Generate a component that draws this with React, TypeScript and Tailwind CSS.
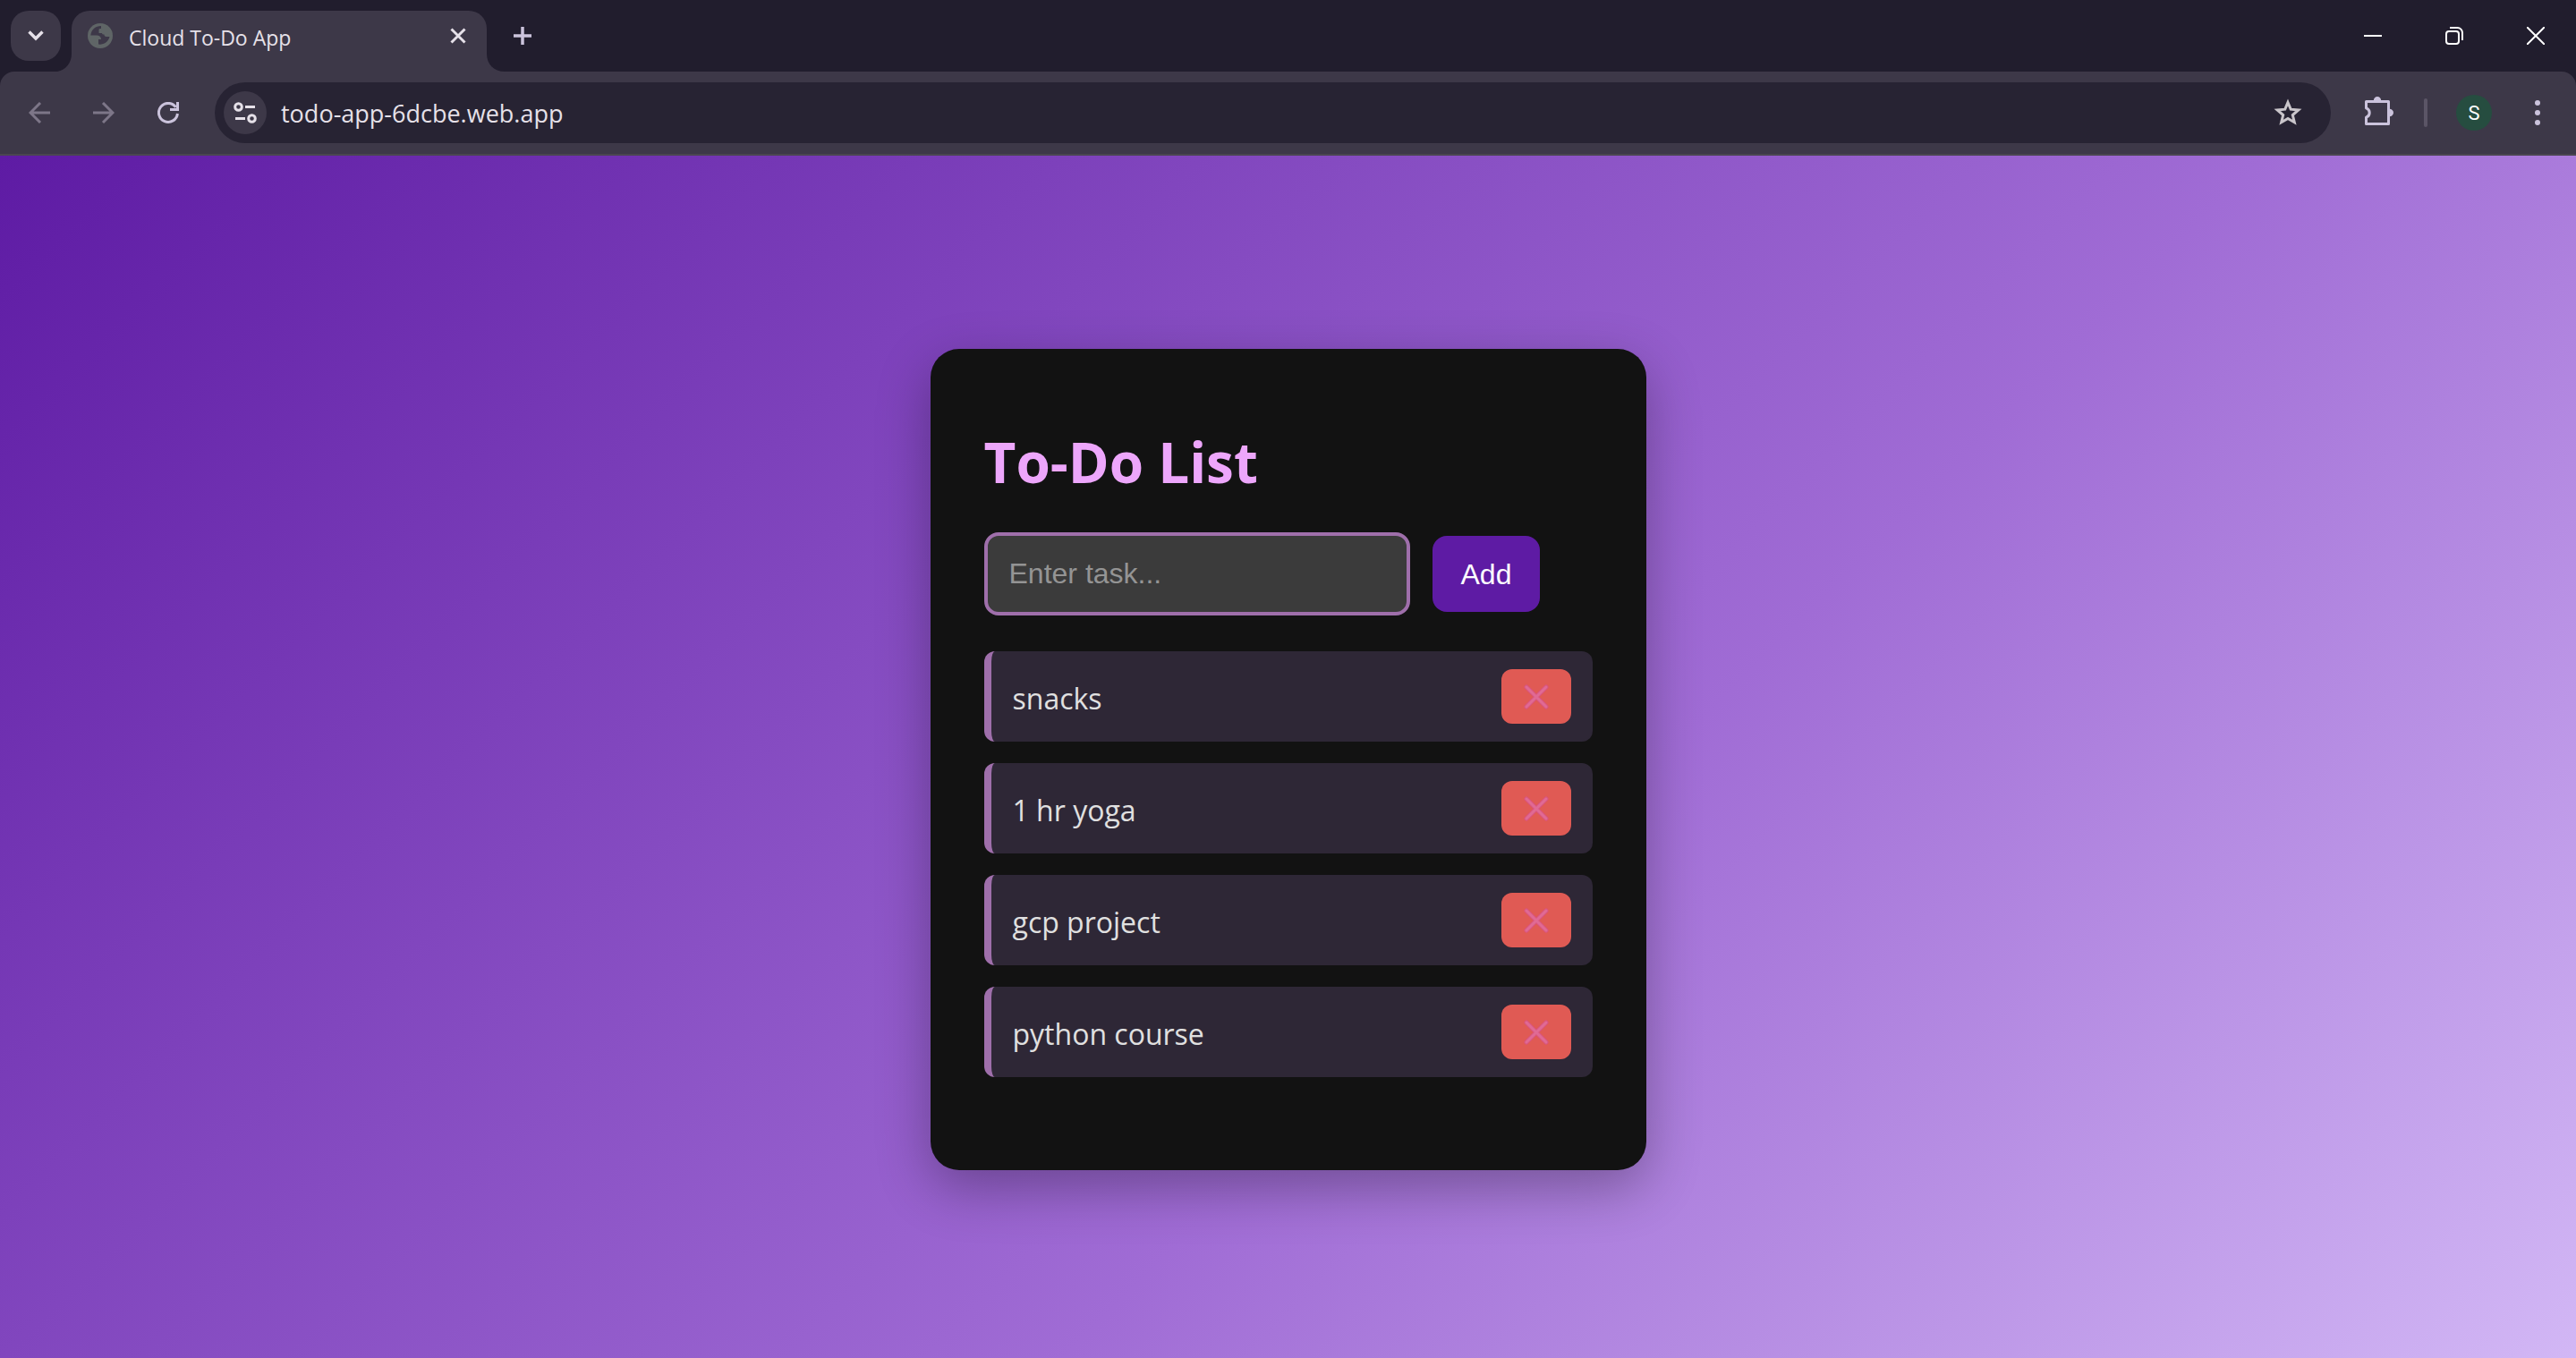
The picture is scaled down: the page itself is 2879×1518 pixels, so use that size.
import React, { useState } from "react";

const INITIAL_TASKS = ["snacks", "1 hr yoga", "gcp project", "python course"];

function Globe() {
  return (
    <svg width="28" height="28" viewBox="0 0 28 28" aria-hidden="true">
      <circle cx="14" cy="14" r="14" fill="#5f6566" />
      <path
        d="M15 3C9 3 4 7 3.300 13.500H10c3 0 5 1.500 5 4.500h-3v5.500c5 .8 11-2 12.500-8.500H21c-2 0-2.500-1-2.500-2.500-1.500 0-2.500-.5-2.500-1.500h-3.500V8c0-2 .5-2 2.500-2z"
        fill="#3d3848"
      />
    </svg>
  );
}

function TabStrip() {
  return (
    <div className="flex h-20 items-end bg-[#211d2d]">
      <button
        aria-label="Search tabs"
        className="mb-3 ml-3 flex h-14 w-14 items-center justify-center rounded-[20px] bg-[#3d3848]"
      >
        <svg width="18" height="12" viewBox="0 0 18 12" fill="none" stroke="#e6e1e9" strokeWidth="3.400">
          <path d="M1.500 1.500 9 9l7.500-7.500" />
        </svg>
      </button>
      <svg className="-ml-1" width="16" height="20" viewBox="0 0 16 20" fill="#3d3848" aria-hidden="true">
        <path d="M16 0v20H0C10 18 16 10 16 0z" />
      </svg>
      <div className="flex h-[68px] w-[464px] items-center rounded-t-[20px] bg-[#3d3848] pr-4 pb-3 pl-[18px]">
        <Globe />
        <span className="ml-[18px] flex-1 pt-1 text-[23px] leading-8 text-[#e6e1e9]">Cloud To-Do App</span>
        <button aria-label="Close tab" className="flex h-8 w-8 items-center justify-center">
          <svg width="18" height="18" viewBox="0 0 18 18" fill="none" stroke="#e6e1e9" strokeWidth="3">
            <path d="M1.500 1.500l15 15M16.500 1.500l-15 15" />
          </svg>
        </button>
      </div>
      <svg width="20" height="20" viewBox="0 0 20 20" fill="#3d3848" aria-hidden="true">
        <path d="M0 0v20h20C8 20 0 12 0 0z" />
      </svg>
      <button aria-label="New tab" className="mb-6 ml-1 flex h-8 w-8 items-center justify-center">
        <svg width="20" height="20" viewBox="0 0 20 20" stroke="#cbc3dc" strokeWidth="3.500">
          <path d="M10 0v20M0 10h20" />
        </svg>
      </button>
      <div className="mb-4 ml-auto flex">
        <button aria-label="Minimize" className="flex h-12 w-[91px] items-center justify-center">
          <svg width="20" height="20" viewBox="0 0 20 20" stroke="#fff" strokeWidth="2">
            <path d="M0 10h20" />
          </svg>
        </button>
        <button aria-label="Restore" className="flex h-12 w-[91px] items-center justify-center">
          <svg width="20" height="20" viewBox="0 0 20 20" fill="none" stroke="#fff" strokeWidth="2">
            <rect x="1" y="5" width="14" height="14" rx="3" />
            <path d="M5 1h8.500A5.500 5.500 0 0 1 19 6.500V15" />
          </svg>
        </button>
        <button aria-label="Close window" className="flex h-12 w-[91px] items-center justify-center">
          <svg width="20" height="20" viewBox="0 0 20 20" stroke="#fff" strokeWidth="2">
            <path d="M0 0l20 20M20 0L0 20" />
          </svg>
        </button>
      </div>
    </div>
  );
}

function Toolbar() {
  return (
    <div className="bg-[#211d2d]">
      <div className="flex h-[94px] items-center rounded-t-[16px] border-b-2 border-[#4a4650] bg-[#3d3848]">
        <button aria-label="Back" className="ml-2 flex h-[72px] w-[72px] items-center justify-center">
          <svg width="24" height="24" viewBox="0 0 24 24" fill="none" stroke="#7d7688" strokeWidth="3">
            <path d="M24 12H2M13 1L2 12l11 11" />
          </svg>
        </button>
        <button aria-label="Forward" className="flex h-[72px] w-[72px] items-center justify-center">
          <svg width="24" height="24" viewBox="0 0 24 24" fill="none" stroke="#7d7688" strokeWidth="3">
            <path d="M0 12h22M11 1l11 11-11 11" />
          </svg>
        </button>
        <button aria-label="Reload" className="flex h-[72px] w-[72px] items-center justify-center">
          <svg width="24" height="24" viewBox="0 0 24 24" fill="none" stroke="#cbc3dc" strokeWidth="3">
            <path d="M22.400 13A10.500 10.500 0 1 1 20.500 5.800" />
            <path d="M22.500 0v8.500H14" />
          </svg>
        </button>
        <div className="ml-4 flex h-[68px] flex-1 items-center rounded-full bg-[#272333] pr-8 pl-2.5">
          <button
            aria-label="View site information"
            className="flex h-12 w-12 items-center justify-center rounded-full bg-[#3d3848]"
          >
            <svg width="26" height="24" viewBox="0 0 26 24" fill="none" stroke="#e6e1e9" strokeWidth="3">
              <circle cx="5.500" cy="5.500" r="3.800" />
              <path d="M13 5.500h11M2 18.500h11" />
              <circle cx="20.500" cy="18.500" r="3.800" />
            </svg>
          </button>
          <input
            aria-label="Address"
            defaultValue="todo-app-6dcbe.web.app"
            className="ml-4 h-12 min-w-0 flex-1 bg-transparent text-[27px] text-[#e6e1e9] outline-none"
          />
          <button aria-label="Bookmark this tab">
            <svg width="32" height="32" viewBox="0 0 32 32" fill="none" stroke="#c9c5ca" strokeWidth="3">
              <path d="M16 4.500l3.200 7.700 8.600.7-6.500 5.600 2 8.200L16 22.400l-7.300 4.300 2-8.200-6.500-5.600 8.600-.7z" />
            </svg>
          </button>
        </div>
        <button aria-label="Extensions" className="ml-[38px]">
          <svg width="32" height="36" viewBox="0 -2 32 36" aria-hidden="true">
            <path
              d="M1.500 3.500h25v25h-25v-7.300a5.500 5.500 0 0 0 0-10.400z"
              fill="none"
              stroke="#cbc3dc"
              strokeWidth="3"
              strokeLinejoin="round"
            />
            <path d="M9.800 2.500a4.200 4.500 0 0 1 8.400 0zM27.500 11.800a4.500 4.200 0 0 1 0 8.400z" fill="#cbc3dc" />
          </svg>
        </button>
        <div className="ml-[34px] h-8 w-1 rounded-full bg-[#5b5566]" />
        <button
          aria-label="Profile"
          className="ml-8 flex h-10 w-10 items-center justify-center rounded-full bg-[#264d40] font-['Roboto',sans-serif] text-[22px] text-white"
        >
          S
        </button>
        <button aria-label="Menu" className="mr-6 ml-8 flex h-12 w-[38px] items-center justify-center">
          <svg width="6" height="28" viewBox="0 0 6 28" fill="#cbc3dc">
            <circle cx="3" cy="3" r="3" />
            <circle cx="3" cy="14" r="3" />
            <circle cx="3" cy="25" r="3" />
          </svg>
        </button>
      </div>
    </div>
  );
}

function TaskRow({ task, onDelete }: { task: string; onDelete: () => void }) {
  return (
    <li className="flex items-center justify-between rounded-xl border-l-8 border-[#9f6fab] bg-[#2e2736] px-6 py-5">
      <span className="pt-1 text-[32px] leading-10 text-[#e0e0e0]">{task}</span>
      <button
        aria-label={`Delete ${task}`}
        onClick={onDelete}
        className="flex h-[61px] w-[78px] items-center justify-center rounded-xl bg-[#e05a54]"
      >
        <svg width="28" height="28" viewBox="0 0 28 28" fill="none" strokeLinecap="round">
          <path d="M3 3l22 22M25 3L3 25" stroke="#d9557f" strokeWidth="5" />
          <path d="M3 3l22 22M25 3L3 25" stroke="#e06a94" strokeWidth="3" />
        </svg>
      </button>
    </li>
  );
}

export default function App() {
  const [tasks, setTasks] = useState(INITIAL_TASKS);
  const [draft, setDraft] = useState("");

  const addTask = (event: React.FormEvent) => {
    event.preventDefault();
    if (!draft.trim()) return;
    setTasks([...tasks, draft.trim()]);
    setDraft("");
  };

  return (
    <div className="flex min-h-screen flex-col font-['Open_Sans',sans-serif]">
      <header>
        <TabStrip />
        <Toolbar />
      </header>
      <main className="flex flex-1 items-center justify-center bg-[linear-gradient(135deg,#5e1ba4_0%,#a06cd5_60%,#d2b7f5_100%)] pt-1.5">
        <section className="w-full max-w-[800px] rounded-[32px] bg-[#121212] px-[60px] pt-[84px] pb-[104px] shadow-[0_20px_60px_rgba(0,0,0,0.3)]">
          <h1 className="text-[62px] leading-[85px] font-bold text-[#eda6fb]">To-Do List</h1>
          <form onSubmit={addTask} className="mt-9 flex items-center gap-[25px] font-['Liberation_Sans',sans-serif] text-[32px]">
            <input
              aria-label="New task"
              value={draft}
              onChange={(event) => setDraft(event.target.value)}
              placeholder="Enter task..."
              className="h-[93px] w-[476px] rounded-2xl border-4 border-[#9f6fab] bg-[#3b3b3b] px-6 text-white outline-none placeholder:text-[#949494]"
            />
            <button type="submit" className="h-[85px] rounded-2xl bg-[#5e1ba4] px-8 text-white">
              Add
            </button>
          </form>
          <ul className="mt-10 flex flex-col gap-6">
            {tasks.map((task, index) => (
              <TaskRow key={index} task={task} onDelete={() => setTasks(tasks.filter((_, i) => i !== index))} />
            ))}
          </ul>
        </section>
      </main>
    </div>
  );
}
